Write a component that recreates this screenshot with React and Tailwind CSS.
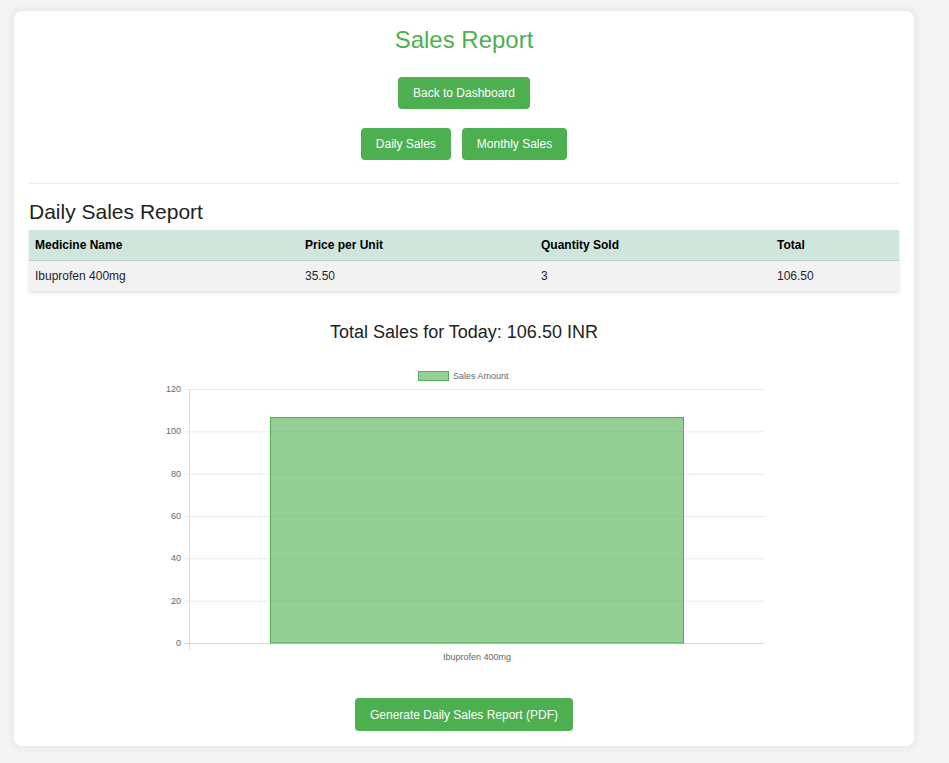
import React from "react";

const green = "#4caf50";

const rows = [{ name: "Ibuprofen 400mg", price: "35.50", qty: "3", total: "106.50" }];

function Btn({ children, className = "" }) {
  return (
    <button className={`h-[32px] px-[15px] rounded-[4px] bg-[#4caf50] text-white text-[12px] leading-none ${className}`}>
      {children}
    </button>
  );
}

function SalesChart() {
  const ticks = [120, 100, 80, 60, 40, 20, 0];
  const top = 29;
  const bottom = 283;
  const y = (v) => bottom - (v / 120) * (bottom - top);
  return (
    <svg width="630" height="310" className="block mx-auto" style={{ fontFamily: "'Liberation Sans', Arial, sans-serif" }}>
      {/* legend */}
      <rect x="269.5" y="11.5" width="30" height="9" fill="rgba(76,175,80,0.6)" stroke={green} />
      <text x="304" y="19" fontSize="9" fill="#666">Sales Amount</text>

      {/* grid */}
      {ticks.map((t) => (
        <g key={t}>
          <line x1="35" x2="615" y1={y(t) + 0.5} y2={y(t) + 0.5} stroke={t === 0 ? "#d9d9d9" : "#ebebeb"} />
          <text x="32" y={y(t) + 3} fontSize="9" fill="#666" textAnchor="end">{t}</text>
        </g>
      ))}
      <line x1="40.5" x2="40.5" y1={top} y2="290" stroke="#dcdcdc" />

      {/* bar */}
      <rect x="121.5" y={y(106.5)} width="413" height={bottom - y(106.5)} fill="rgba(76,175,80,0.6)" stroke={green} />

      <text x="328" y="300" fontSize="9" fill="#666" textAnchor="middle">Ibuprofen 400mg</text>
    </svg>
  );
}

export default function App() {
  return (
    <div className="min-h-screen bg-[#f4f4f4] pt-[11px] pb-[17px] text-[#333]" style={{ fontFamily: "'Liberation Sans', Arial, sans-serif" }}>
      <div className="ml-[14px] w-[900px] bg-white rounded-[8px] shadow-[0_0_10px_rgba(0,0,0,0.1)] p-[15px]">
        <h1 className="text-center text-[24px] leading-[28px] text-[#4caf50]">Sales Report</h1>

        <div className="flex justify-center mt-[23px]">
          <Btn>Back to Dashboard</Btn>
        </div>
        <div className="flex justify-center gap-[11px] mt-[19px]">
          <Btn>Daily Sales</Btn>
          <Btn>Monthly Sales</Btn>
        </div>

        <hr className="mt-[23px] border-0 border-t border-[#eee]" />

        <h2 className="mt-[16px] text-[21px] leading-[24px] text-[#222]">Daily Sales Report</h2>

        <table className="mt-[6px] w-full border-collapse text-[12px] shadow-[0_2px_4px_rgba(0,0,0,0.12)]">
          <thead>
            <tr className="bg-[#d0e6dc] border-b border-[#b6d3c6]">
              <th className="w-[270px] h-[30px] pl-[6px] text-left font-bold text-black">Medicine Name</th>
              <th className="w-[236px] pl-[6px] text-left font-bold text-black">Price per Unit</th>
              <th className="w-[236px] pl-[6px] text-left font-bold text-black">Quantity Sold</th>
              <th className="pl-[6px] text-left font-bold text-black">Total</th>
            </tr>
          </thead>
          <tbody>
            {rows.map((r) => (
              <tr key={r.name} className="bg-[#f2f2f2]">
                <td className="h-[31px] pl-[6px] text-[#1f1f33]">{r.name}</td>
                <td className="pl-[6px] text-[#1f1f33]">{r.price}</td>
                <td className="pl-[6px] text-[#1f1f33]">{r.qty}</td>
                <td className="pl-[6px] text-[#1f1f33]">{r.total}</td>
              </tr>
            ))}
          </tbody>
        </table>

        <p className="mt-[31px] text-center text-[18px] leading-[21px] text-[#222]">Total Sales for Today: 106.50 INR</p>

        <div className="mt-[17px]">
          <SalesChart />
        </div>

        <div className="flex justify-center mt-[28px]">
          <Btn className="h-[33px]">Generate Daily Sales Report (PDF)</Btn>
        </div>
      </div>
    </div>
  );
}
